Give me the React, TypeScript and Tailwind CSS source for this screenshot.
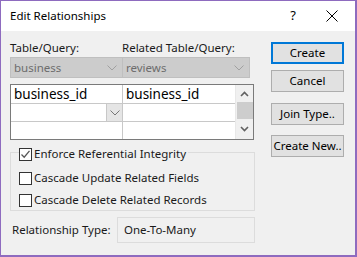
import React from "react"

function Chevron({ className = "" }: { className?: string }) {
  return (
    <svg width="10" height="6" viewBox="0 0 10 6" className={className}>
      <path d="M0.5 0.5 L5 5 L9.5 0.5" fill="none" stroke="currentColor" strokeWidth="1" />
    </svg>
  )
}

function Combo({ value, width }: { value: string; width: string }) {
  return (
    <div className={`${width} h-[21px] bg-[#cccccc] border border-[#bfbfbf] flex items-center justify-between pl-[3px] pr-[5px] text-[#6d6d6d] text-[11.5px]`}>
      <span>{value}</span>
      <Chevron className="text-[#a0a0a0]" />
    </div>
  )
}

function Check({ checked, label }: { checked?: boolean; label: string }) {
  return (
    <div className="flex items-center gap-[2px] bg-[#f0f0f0] pr-[2px] w-fit">
      <div className="w-[13px] h-[13px] border border-[#333333] bg-white flex items-center justify-center">
        {checked && (
          <svg width="11" height="11" viewBox="0 0 11 11">
            <path d="M1.5 5.5 L4.2 8.2 L9.5 1.8" fill="none" stroke="#555555" strokeWidth="1.3" />
          </svg>
        )}
      </div>
      <span className="text-[11.5px] leading-[16px] text-[#1a1a1a] whitespace-nowrap">{label}</span>
    </div>
  )
}

function Btn({ label, primary }: { label: string; primary?: boolean }) {
  return (
    <div
      className={`w-[73px] h-[22px] flex items-center justify-center text-[11.5px] text-black bg-[#e1e1e1] whitespace-nowrap ${
        primary ? "border-2 border-[#0078d7]" : "border border-[#adadad]"
      }`}
    >
      {label}
    </div>
  )
}

export default function App() {
  return (
    <div
      className="w-[357px] h-[257px] bg-[#f0f0f0] border border-[#8e6bbf] border-r-2 border-b-2 flex flex-col"
      style={{ fontFamily: '"Noto Sans", "Open Sans", sans-serif' }}
    >
      <div className="h-[30px] bg-white flex items-center pl-[9px] text-[11.5px] text-black shrink-0">
        <span className="flex-1">Edit Relationships</span>
        <span className="w-[20px] text-center text-[13px] mr-[23px]">?</span>
        <svg width="12" height="12" viewBox="0 0 12 12" className="mr-[17px]">
          <path d="M0.5 0.5 L11.5 11.5 M11.5 0.5 L0.5 11.5" stroke="#000" strokeWidth="1" />
        </svg>
      </div>

      <div className="flex pl-[9px]">
        <div className="w-[246px] flex flex-col">
          <div className="flex mt-[9px] text-[11.5px] leading-[16px] text-[#1a1a1a]">
            <span className="w-[112px]">Table/Query:</span>
            <span>Related Table/Query:</span>
          </div>
          <div className="flex mt-[1px]">
            <Combo value="business" width="w-[113px]" />
            <Combo value="reviews" width="w-[128px] -ml-px" />
          </div>

          <div className="mt-[6px] w-[244px] h-[56px] border border-[#7a7a7a] bg-white flex">
            <div className="flex-1 grid grid-cols-[112px_1fr] grid-rows-[19px_18px_1fr]">
              <div className="border-r border-b border-[#c8c8c8] pl-[3px] text-[13.5px] leading-[18px] text-black">business_id</div>
              <div className="border-b border-[#c8c8c8] pl-[3px] text-[13.5px] leading-[18px] text-black">business_id</div>
              <div className="border-r border-b border-[#c8c8c8] flex justify-end">
                <div className="w-[16px] h-full bg-[#e5e5e5] border-l border-[#c8c8c8] flex items-center justify-center">
                  <Chevron className="text-[#777777]" />
                </div>
              </div>
              <div className="border-b border-[#c8c8c8]"></div>
              <div className="border-r border-[#c8c8c8]"></div>
              <div></div>
            </div>
            <div className="w-[18px] border-l border-[#e8e8e8] bg-[#f0f0f0] flex flex-col items-center">
              <div className="h-[17px] flex items-center justify-center">
                <svg width="9" height="6" viewBox="0 0 9 6">
                  <path d="M1 5 L4.5 1.5 L8 5" fill="none" stroke="#606060" strokeWidth="1.6" />
                </svg>
              </div>
              <div className="w-[16px] h-[17px] bg-[#cdcdcd]"></div>
              <div className="flex-1 flex items-center justify-center">
                <svg width="9" height="6" viewBox="0 0 9 6">
                  <path d="M1 1 L4.5 4.5 L8 1" fill="none" stroke="#606060" strokeWidth="1.6" />
                </svg>
              </div>
            </div>
          </div>

          <div className="mt-[12px] w-[245px] h-[59px] border border-[#dcdcdc] flex flex-col pl-[8px]">
            <div className="-mt-[7px]">
              <Check checked label="Enforce Referential Integrity" />
            </div>
            <div className="mt-[8px]">
              <Check label="Cascade Update Related Fields" />
            </div>
            <div className="mt-[6px]">
              <Check label="Cascade Delete Related Records" />
            </div>
          </div>

          <div className="flex items-center mt-[6px]">
            <span className="w-[107px] pl-[2px] text-[11.5px] text-[#1a1a1a]">Relationship Type:</span>
            <div className="w-[138px] h-[26px] border border-[#dcdcdc] flex items-center pl-[6px] text-[11.5px] text-[#1a1a1a]">
              One-To-Many
            </div>
          </div>
        </div>

        <div className="ml-[15px] mt-[11px] flex flex-col">
          <Btn label="Create" primary />
          <div className="mt-[6px]"><Btn label="Cancel" /></div>
          <div className="mt-[11px]"><Btn label="Join Type.." /></div>
          <div className="mt-[10px]"><Btn label="Create New.." /></div>
        </div>
      </div>
    </div>
  )
}
